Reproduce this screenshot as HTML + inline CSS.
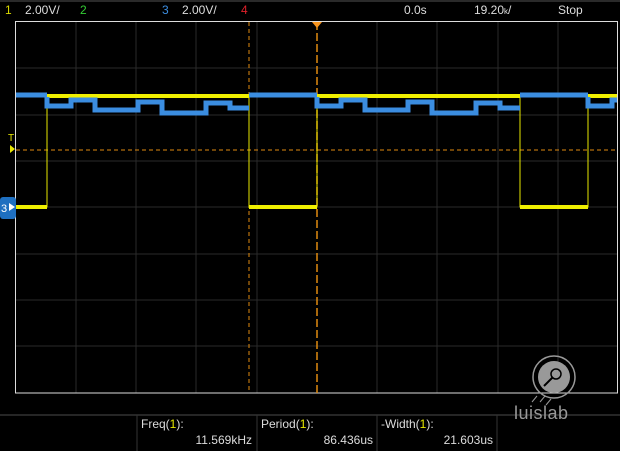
<!DOCTYPE html>
<html><head><meta charset="utf-8"><style>
html,body{margin:0;padding:0;background:#000;}
svg{display:block}
text{font-family:"Liberation Sans",sans-serif;}
</style></head><body>
<svg width="620" height="451" viewBox="0 0 620 451" xmlns="http://www.w3.org/2000/svg">
<rect width="620" height="451" fill="#000"/>
<line x1="0" y1="1" x2="620" y2="1" stroke="#555" stroke-width="1"/>
<g stroke="#2a2a2a" stroke-width="1">
<line x1="76" y1="22" x2="76" y2="393"/><line x1="136" y1="22" x2="136" y2="393"/><line x1="196" y1="22" x2="196" y2="393"/><line x1="257" y1="22" x2="257" y2="393"/><line x1="377" y1="22" x2="377" y2="393"/><line x1="437" y1="22" x2="437" y2="393"/><line x1="498" y1="22" x2="498" y2="393"/><line x1="558" y1="22" x2="558" y2="393"/>
<line x1="15" y1="68" x2="617" y2="68"/><line x1="15" y1="115" x2="617" y2="115"/><line x1="15" y1="161" x2="617" y2="161"/><line x1="15" y1="207" x2="617" y2="207"/><line x1="15" y1="254" x2="617" y2="254"/><line x1="15" y1="300" x2="617" y2="300"/><line x1="15" y1="346" x2="617" y2="346"/>
</g>
<rect x="15.5" y="21.5" width="602" height="371.5" fill="none" stroke="#ddd" stroke-width="1"/>
<line x1="0" y1="415" x2="620" y2="415" stroke="#333" stroke-width="1.5"/>
<g stroke="#333" stroke-width="1"><line x1="137" y1="415" x2="137" y2="451"/><line x1="257" y1="415" x2="257" y2="451"/><line x1="377" y1="415" x2="377" y2="451"/><line x1="497" y1="415" x2="497" y2="451"/></g>
<line x1="249" y1="22" x2="249" y2="393" stroke="#e08a10" stroke-width="1" stroke-dasharray="4,3"/>
<line x1="317" y1="22" x2="317" y2="393" stroke="#e08a10" stroke-width="1.5" stroke-dasharray="8,3"/>
<line x1="16" y1="150" x2="617" y2="150" stroke="#e08a10" stroke-width="1" stroke-dasharray="4,3"/>
<polygon points="312,22 322,22 317,28" fill="#f7941d"/>
<g fill="none" stroke="#e8e800">
<polyline stroke-width="1" points="16,207 47,207 47,96 249,96 249,207 317,207 317,96 520,96 520,207 588,207 588,96 617,96"/>
</g>
<g fill="#f0f000">
<rect x="16" y="205" width="31" height="4"/><rect x="47" y="94" width="202" height="4"/><rect x="249" y="205" width="68" height="4"/><rect x="317" y="94" width="203" height="4"/><rect x="520" y="205" width="68" height="4"/><rect x="588" y="94" width="29" height="4"/>
</g>
<g fill="none" stroke="#3b8de0" stroke-width="5" stroke-linejoin="miter">
<polyline points="16,95 47,95"/>
<polyline points="47,95 47,106 71,106 71,100 95,100 95,110 138,110 138,102 162,102 162,113 206,113 206,103 230,103 230,108 249,108"/>
<polyline points="249,95 317,95"/>
<polyline points="317,95 317,106 341,106 341,100 365,100 365,110 408,110 408,102 432,102 432,113 476,113 476,103 500,103 500,108 520,108"/>
<polyline points="520,95 588,95"/>
<polyline points="588,95 588,106 612,106 612,100 617,100"/>
</g>
<g fill="#f0f000">
<rect x="47" y="94" width="202" height="3"/><rect x="317" y="94" width="203" height="3"/><rect x="588" y="94" width="29" height="3"/>
</g>
<text x="8" y="141" fill="#e8e800" font-size="10">T</text>
<polygon points="10,145 15,149 10,153" fill="#e8e800"/>
<rect x="0" y="197" width="16" height="22" rx="3" fill="#1e6fc0"/>
<text x="1" y="212" fill="#fff" font-size="11">3</text>
<polygon points="9,203 15,207 9,211" fill="#fff"/>
<g font-size="12" fill="#ddd">
<text x="5" y="14" fill="#d8d800">1</text><text x="25" y="14">2.00V/</text>
<text x="80" y="14" fill="#3c3">2</text>
<text x="162" y="14" fill="#3b8de0">3</text><text x="182" y="14">2.00V/</text>
<text x="241" y="14" fill="#e0202a">4</text>
<text x="404" y="14">0.0s</text>
<text x="474" y="14">19.20<tspan font-size="8">k</tspan>/</text>
<text x="558" y="14">Stop</text>
</g>
<circle cx="554" cy="377" r="21" fill="none" stroke="#999" stroke-width="1.5"/>
<circle cx="554" cy="377" r="16" fill="#999"/>
<circle cx="556" cy="374" r="5" fill="none" stroke="#000" stroke-width="1.5"/>
<line x1="553" y1="377" x2="544" y2="386" stroke="#000" stroke-width="2"/>
<g stroke="#999" stroke-width="1"><line x1="532" y1="402" x2="537" y2="396"/><line x1="540" y1="402" x2="545" y2="396"/><line x1="546" y1="405" x2="551" y2="399"/></g>
<text x="514" y="419" fill="#999" font-size="18" letter-spacing="0.5">luislab</text>
<g font-size="12" fill="#ddd">
<text x="141" y="428">Freq(<tspan fill="#e8e800">1</tspan>):</text>
<text x="252" y="444" text-anchor="end">11.569kHz</text>
<text x="261" y="428">Period(<tspan fill="#e8e800">1</tspan>):</text>
<text x="373" y="444" text-anchor="end">86.436us</text>
<text x="381" y="428">-Width(<tspan fill="#e8e800">1</tspan>):</text>
<text x="493" y="444" text-anchor="end">21.603us</text>
</g>
</svg>
</body></html>
